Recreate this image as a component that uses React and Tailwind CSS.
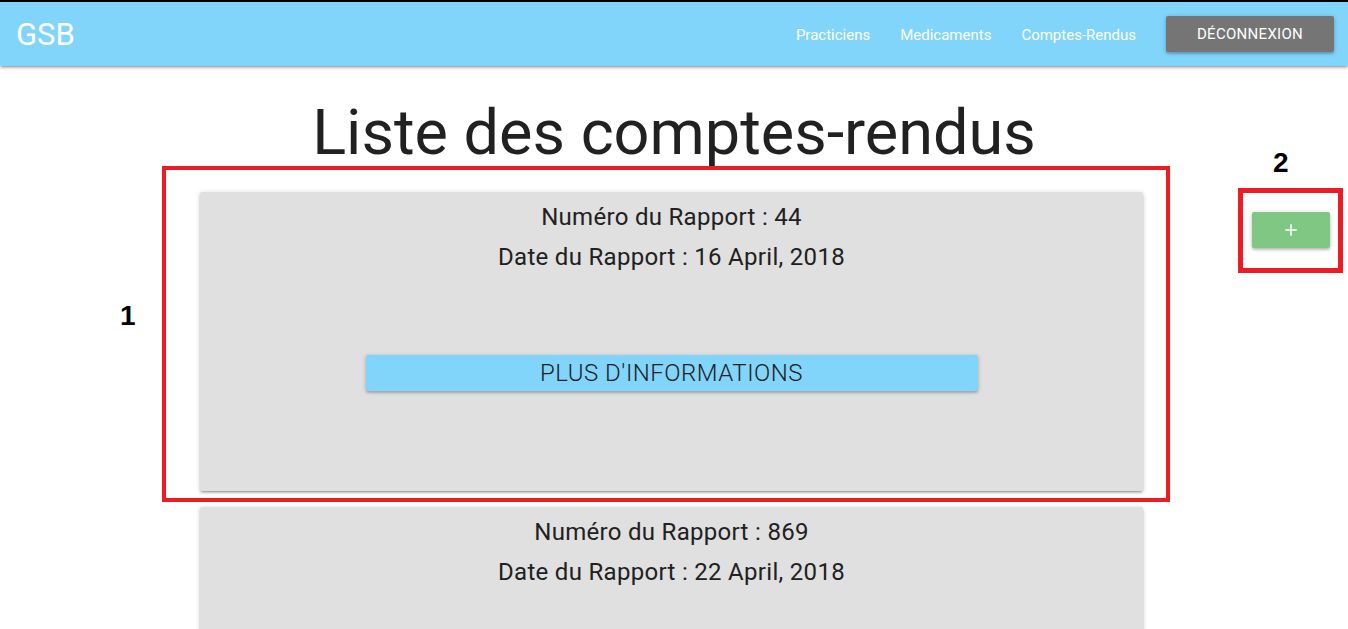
import { Plus } from "lucide-react";

const rapports = [
  { numero: 44, date: "16 April, 2018" },
  { numero: 869, date: "22 April, 2018" },
];

function Navbar() {
  return (
    <nav className="h-[66px] border-t-2 border-black bg-[#81d4fa] shadow-[0_2px_2px_0_rgba(0,0,0,0.14),0_3px_1px_-2px_rgba(0,0,0,0.12),0_1px_5px_0_rgba(0,0,0,0.2)] relative z-10">
      <div className="flex h-16 items-center justify-between pl-4 pr-[14px]">
        <a className="text-[31px] leading-none text-white">GSB</a>
        <ul className="flex items-center text-[15px] text-white">
          <li className="px-[15px] pt-[2px]">Practiciens</li>
          <li className="px-[15px] pt-[2px]">Medicaments</li>
          <li className="px-[15px] pt-[2px]">Comptes-Rendus</li>
          <li className="pl-[15px]">
            <button className="flex h-9 w-[168px] items-center justify-center rounded-[2px] bg-[#757575] pt-[1px] text-[15px] tracking-[0.3px] text-white uppercase shadow-[0_2px_2px_0_rgba(0,0,0,0.14),0_1px_5px_0_rgba(0,0,0,0.2)]">
              Déconnexion
            </button>
          </li>
        </ul>
      </div>
    </nav>
  );
}

function Card({ numero, date }) {
  return (
    <div className="mb-4 flex h-[299px] flex-col items-center rounded-[2px] bg-[#e0e0e0] pt-[5px] text-[24px] leading-[40px] tracking-[0.3px] text-[#212121] shadow-[0_2px_2px_0_rgba(0,0,0,0.14),0_3px_1px_-2px_rgba(0,0,0,0.12),0_1px_5px_0_rgba(0,0,0,0.2)]">
      <p>Numéro du Rapport : {numero}</p>
      <p>Date du Rapport : {date}</p>
      <button className="mt-[78px] flex h-9 w-[612px] items-center justify-center rounded-[2px] bg-[#81d4fa] text-[24px] font-light tracking-[0.5px] uppercase text-[#212121] shadow-[0_2px_2px_0_rgba(0,0,0,0.14),0_1px_5px_0_rgba(0,0,0,0.2)]">
        Plus d'informations
      </button>
    </div>
  );
}

export default function App() {
  return (
    <div className="relative h-screen overflow-hidden bg-white font-['Roboto',sans-serif]">
      <Navbar />
      <h2 className="mt-[35px] text-center text-[63px] leading-none text-[#212121]">
        Liste des comptes-rendus
      </h2>
      <div className="mt-[28px] flex">
        <div className="ml-[200px] w-[943px]">
          {rapports.map((r) => (
            <Card key={r.numero} {...r} />
          ))}
        </div>
        <div className="ml-[109px] pt-5">
          <button className="flex h-9 w-[78px] items-center justify-center rounded-[2px] bg-[#81c784] text-white shadow-[0_2px_2px_0_rgba(0,0,0,0.14),0_1px_5px_0_rgba(0,0,0,0.2)]">
            <Plus size={18} strokeWidth={2} />
          </button>
        </div>
      </div>

      {/* annotations */}
      <div className="pointer-events-none absolute left-[162px] top-[166px] h-[336px] w-[1008px] border-4 border-[#ed1c24]" />
      <div className="pointer-events-none absolute left-[1238px] top-[188px] h-[85px] w-[105px] border-[5px] border-[#ed1c24]" />
      <span className="absolute left-[120px] top-[295px] font-['Liberation_Sans',sans-serif] text-[28px] font-bold text-black">1</span>
      <span className="absolute left-[1273px] top-[142px] font-['Liberation_Sans',sans-serif] text-[28px] font-bold text-black">2</span>
    </div>
  );
}
